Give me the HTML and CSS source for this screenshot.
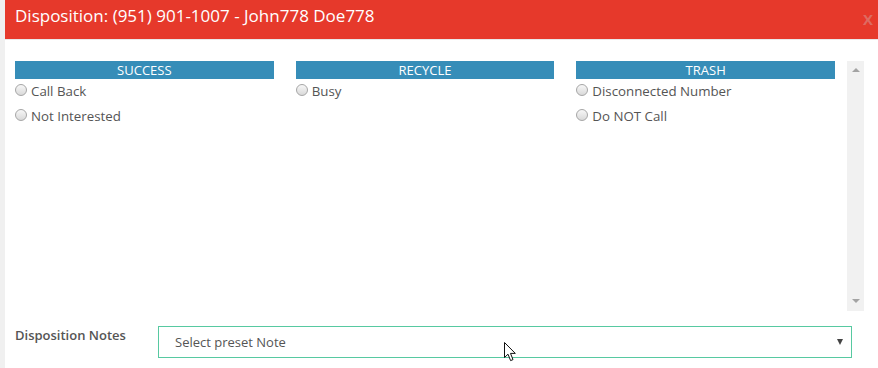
FILE: index.html
```html
<!DOCTYPE html>
<html lang="en">
<head>
    <meta charset="UTF-8">
    <meta name="viewport" content="width=device-width, initial-scale=1.0">
    <title>Disposition</title>
    <link rel="stylesheet" href="styles.css">
</head>
<body>
    <div class="modal">
        <div class="modal-header">
            <h1 class="modal-title">Disposition: (951) 901-1007 - John778 Doe778</h1>
            <span class="close">X</span>
        </div>

        <div class="modal-body">
            <div class="scroll-area">
                <div class="columns">
                    <div class="dispo-col">
                        <div class="col-head">SUCCESS</div>
                        <label class="radio-row"><input type="radio" name="dispo"> Call Back</label>
                        <label class="radio-row"><input type="radio" name="dispo"> Not Interested</label>
                    </div>
                    <div class="dispo-col">
                        <div class="col-head">RECYCLE</div>
                        <label class="radio-row"><input type="radio" name="dispo"> Busy</label>
                    </div>
                    <div class="dispo-col">
                        <div class="col-head">TRASH</div>
                        <label class="radio-row"><input type="radio" name="dispo"> Disconnected Number</label>
                        <label class="radio-row"><input type="radio" name="dispo"> Do NOT Call</label>
                    </div>
                </div>
                <div class="scrollbar">
                    <span class="arrow-up"></span>
                    <span class="arrow-down"></span>
                </div>
            </div>

            <div class="notes-row">
                <div class="notes-label">Disposition Notes</div>
                <div class="select-box">
                    <span>Select preset Note</span>
                    <span class="caret"></span>
                    <svg class="cursor" width="13" height="20" viewBox="0 0 13 20">
                        <path d="M0.5 0.5 L0.5 15.5 L4 12.2 L6.6 18.6 L9 17.6 L6.5 11.4 L11.3 11.4 Z" fill="#fff" stroke="#111" stroke-width="1"/>
                    </svg>
                </div>
            </div>
        </div>
    </div>
</body>
</html>
```

FILE: styles.css
```css
body {
    margin: 0;
    padding: 0 0 0 5px;
    background-color: #f0f0f0;
    font-family: 'Open Sans', 'Liberation Sans', sans-serif;
    color: #555;
    overflow: hidden;
}
.modal {
    background-color: #fff;
    height: 368px;
}
.modal-header {
    height: 40px;
    box-sizing: border-box;
    background-color: #e6392b;
    border-bottom: 1px solid #e9e9e9;
    display: flex;
    justify-content: space-between;
    align-items: flex-start;
    padding: 4px 5px 0 10px;
}
.modal-title {
    margin: 0;
    font-size: 17px;
    font-weight: 400;
    line-height: 23px;
    color: #fff;
}
.close {
    margin-top: 5px;
    font-size: 15px;
    font-weight: 700;
    line-height: 20px;
    color: rgba(205, 205, 205, 0.35);
}
.modal-body {
    padding: 21px 14px 0 10px;
}
.scroll-area {
    display: flex;
    height: 250px;
}
.columns {
    flex: 1;
    display: grid;
    grid-template-columns: repeat(3, 1fr);
    column-gap: 22px;
    align-items: start;
    margin-right: 12px;
}
.col-head {
    background-color: #368db8;
    color: #fff;
    font-size: 13px;
    line-height: 18px;
    text-align: center;
}
.radio-row {
    display: flex;
    align-items: center;
    gap: 4px;
    height: 25px;
    padding-bottom: 2px;
    box-sizing: border-box;
    font-size: 13.3px;
}
.radio-row input {
    appearance: none;
    margin: 0 0 1px 0;
    width: 12px;
    height: 12px;
    border-radius: 50%;
    border: 1px solid #a6a6a6;
    background: linear-gradient(#f7f7f7, #d9d9d9);
    box-sizing: border-box;
}
.scrollbar {
    width: 17px;
    background-color: #f1f1f1;
    display: flex;
    flex-direction: column;
    justify-content: space-between;
    align-items: center;
    padding: 7px 0 8px;
    box-sizing: border-box;
}
.arrow-up {
    border-left: 4px solid transparent;
    border-right: 4px solid transparent;
    border-bottom: 4px solid #a3a3a3;
}
.arrow-down {
    border-left: 4px solid transparent;
    border-right: 4px solid transparent;
    border-top: 4px solid #a3a3a3;
}
.notes-row {
    display: grid;
    grid-template-columns: 143px 1fr;
    margin: 15px 12px 0 0;
    align-items: start;
}
.notes-label {
    font-size: 13px;
    font-weight: 600;
    line-height: 18px;
}
.select-box {
    position: relative;
    height: 32px;
    box-sizing: border-box;
    border: 1px solid #57c9a1;
    display: flex;
    align-items: center;
    justify-content: space-between;
    padding: 0 8px 0 16px;
    font-size: 13px;
}
.caret {
    border-left: 3px solid transparent;
    border-right: 3px solid transparent;
    border-top: 6px solid #444;
}
.cursor {
    position: absolute;
    left: 345px;
    top: 15px;
}
```
